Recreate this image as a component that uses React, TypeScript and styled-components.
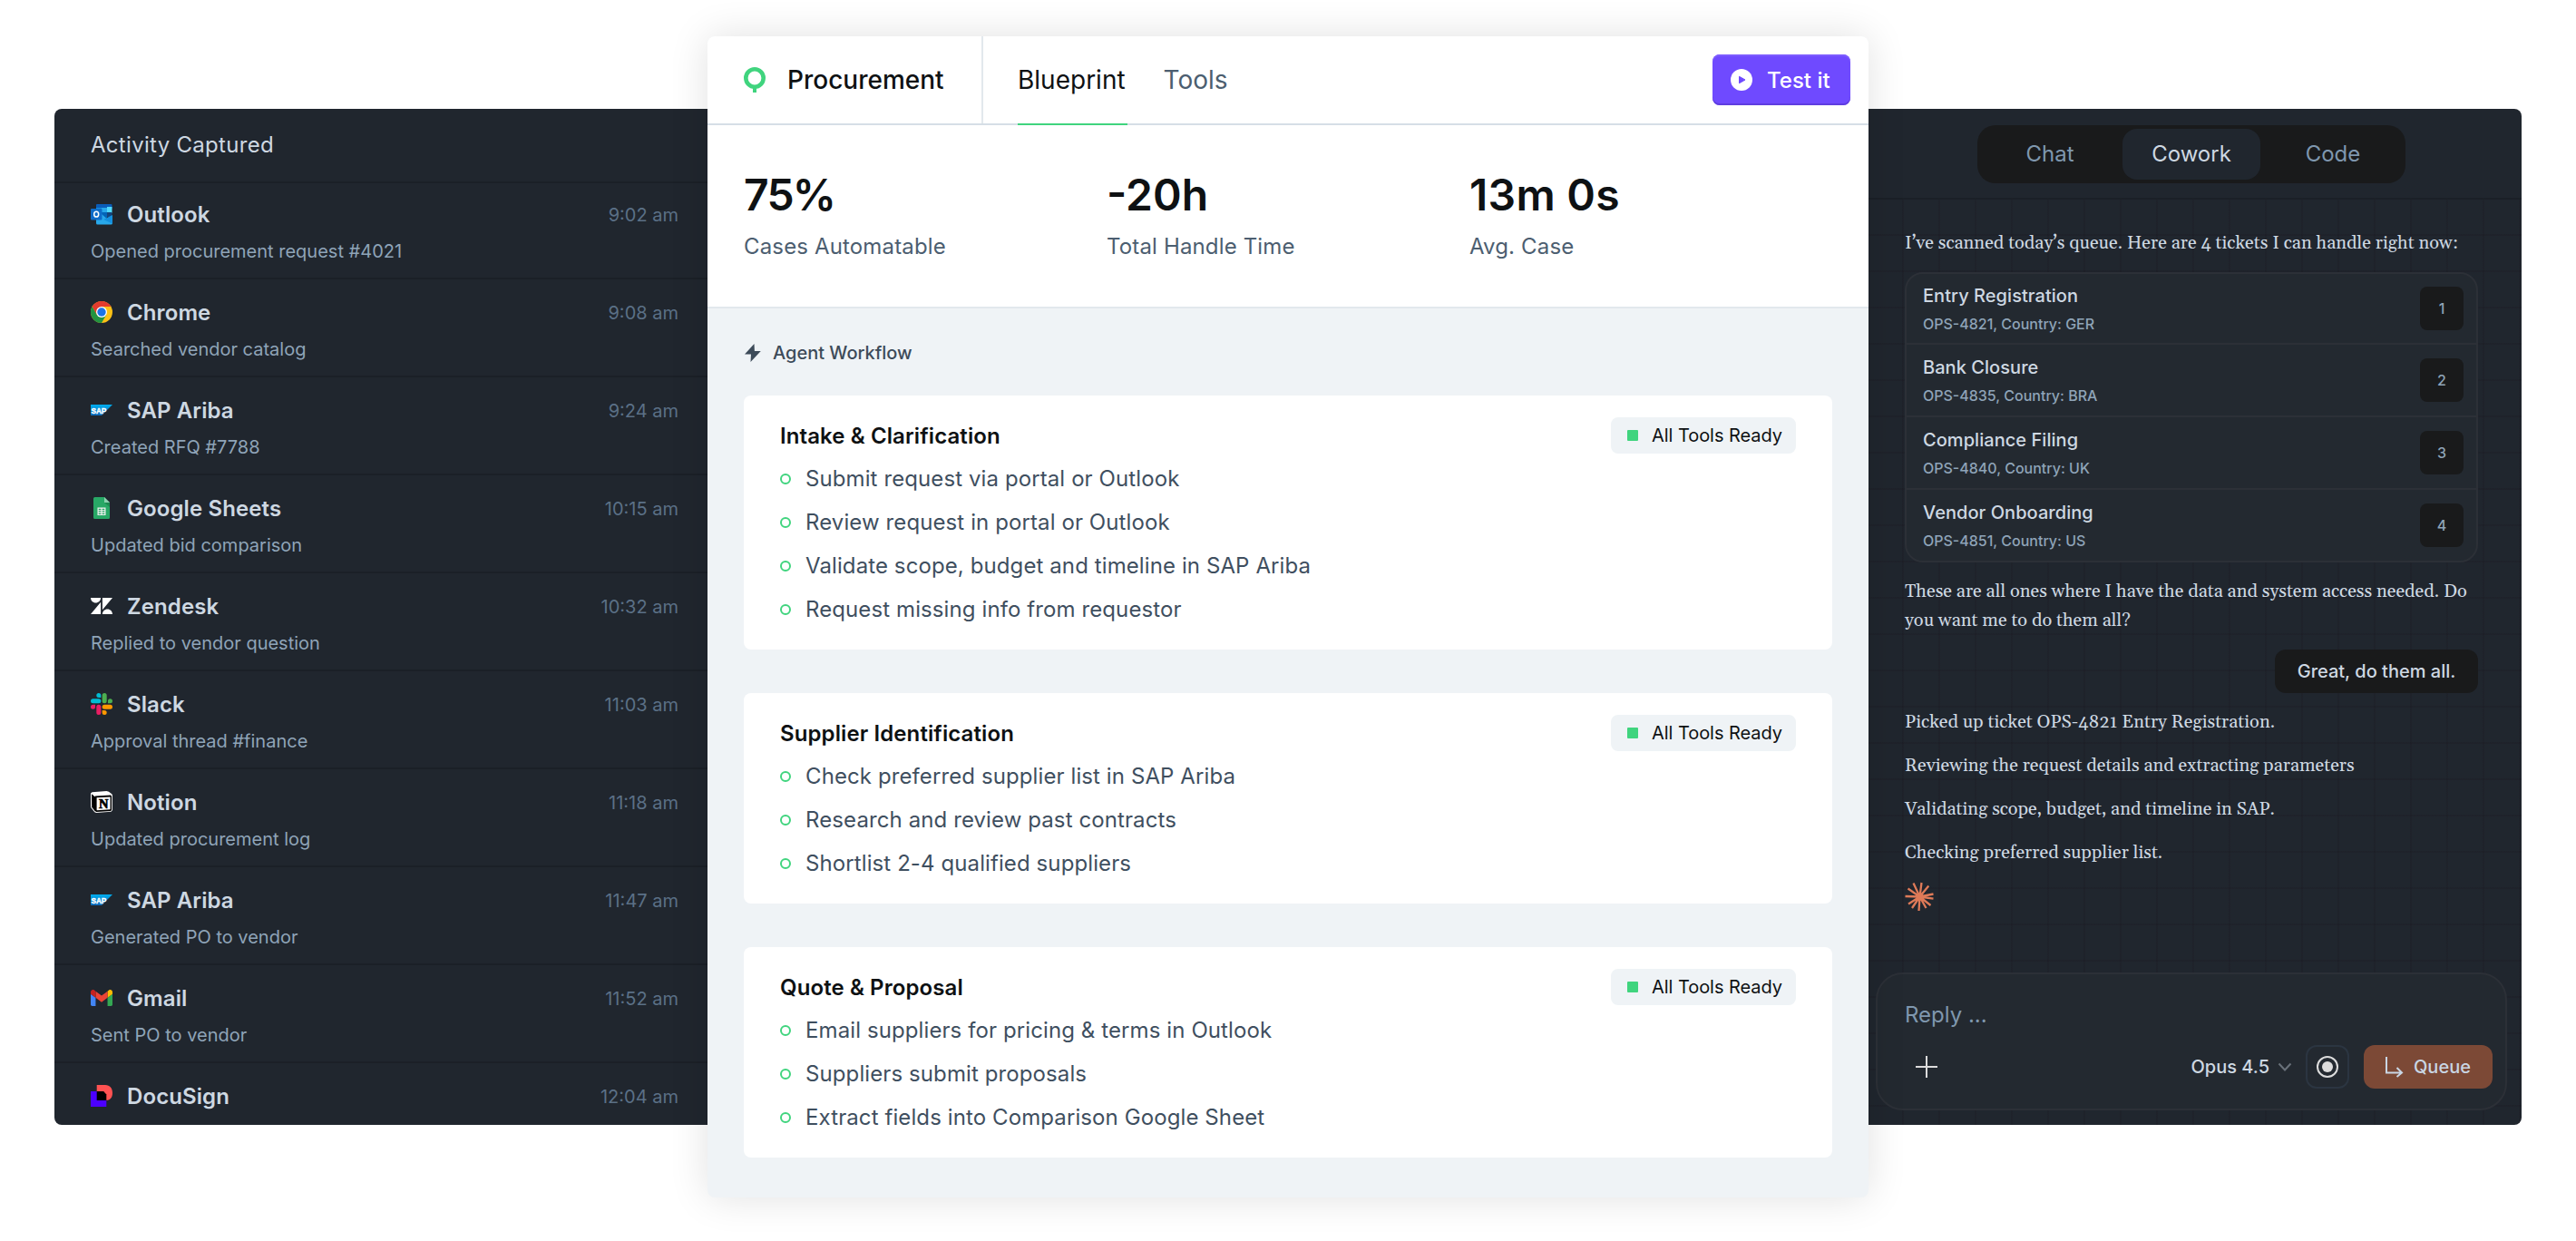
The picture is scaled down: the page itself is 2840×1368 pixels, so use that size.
import React from 'react';
import styled, { createGlobalStyle } from 'styled-components';

const colors = {
  panel: '#20262e',
  panelLine: '#1b2027',
  raised: '#232930',
  raisedLine: '#2c3037',
  black: '#191a1b',
  ink: '#0e1113',
  text: '#ced8e2',
  muted: '#8fa4b8',
  faded: '#5b7086',
  slate: '#4c5e70',
  green: '#40d47e',
  mist: '#eff3f6',
};

const GlobalStyle = createGlobalStyle`
  *,
  *::before {
    box-sizing: border-box;
  }
  body {
    margin: 0;
    background: #fff;
    font-family: Inter, 'Liberation Sans', sans-serif;
  }
  svg {
    display: block;
    flex: none;
  }
`;

const Page = styled.main`
  display: flex;
  align-items: flex-start;
  justify-content: center;
  width: 2840px;
  height: 1368px;
  padding-top: 40px;
  overflow: hidden;
`;

const SidePanel = styled.section<{ side: 'left' | 'right' }>`
  display: flex;
  flex-direction: column;
  width: 720px;
  height: 1120px;
  margin-top: 80px;
  overflow: hidden;
  background: ${colors.panel};
  border-radius: ${({ side }) => (side === 'left' ? '8px 0 0 8px' : '0 8px 8px 0')};
`;

/* Activity */

const ActivityHeader = styled.header`
  flex: none;
  height: 82px;
  padding: 0 40px;
  border-bottom: 2px solid ${colors.panelLine};
  color: ${colors.text};
  font-size: 24px;
  line-height: 79px;
  letter-spacing: 0.3px;
`;

const ActivityList = styled.div`
  margin-top: -2px;
`;

const ActivityRow = styled.article`
  height: 108px;
  padding: 20px 32px 0 40px;
  border-bottom: 2px solid ${colors.panelLine};
`;

const ActivityTitle = styled.div`
  display: flex;
  align-items: center;
  height: 32px;
`;

const AppName = styled.span`
  flex: 1;
  margin-left: 16px;
  color: ${colors.text};
  font-size: 24px;
  font-weight: 600;
  line-height: 31px;
  letter-spacing: 0.1px;
`;

const Time = styled.time`
  padding-top: 2px;
  color: ${colors.faded};
  font-size: 20px;
`;

const Description = styled.p`
  margin: 10px 0 0;
  color: ${colors.muted};
  font-size: 20px;
  line-height: 30px;
`;

/* Blueprint */

const Blueprint = styled.section`
  z-index: 1;
  width: 1280px;
  height: 1280px;
  overflow: hidden;
  background: ${colors.mist};
  border-radius: 8px;
  box-shadow: 0 0 44px rgba(0, 0, 0, 0.12);
`;

const BlueprintHeader = styled.header`
  display: flex;
  height: 98px;
  background: #fff;
  border-bottom: 2px solid #d6dee6;
`;

const Brand = styled.div`
  display: flex;
  align-items: center;
  gap: 24px;
  width: 304px;
  padding-left: 40px;
  border-right: 2px solid #e2e8ed;
  color: ${colors.ink};
  font-size: 28px;
  font-weight: 500;
`;

const Nav = styled.nav`
  display: flex;
  flex: 1;
  gap: 40px;
  padding-left: 38px;
`;

const NavTab = styled.a<{ active?: boolean }>`
  height: 98px;
  padding-right: 2px;
  border-bottom: 2px solid ${({ active }) => (active ? colors.green : 'transparent')};
  color: ${({ active }) => (active ? colors.ink : colors.slate)};
  font-size: 28px;
  line-height: 96px;
`;

const TestButton = styled.button`
  display: flex;
  align-items: center;
  gap: 16px;
  width: 152px;
  height: 56px;
  margin: 20px 20px 0 0;
  padding: 0 0 0 20px;
  border: 0;
  border-radius: 8px;
  background: #6f4aff;
  box-shadow: inset 0 2px 0 #7d5cff, inset 0 -2px 0 #5f3de0;
  color: #fff;
  font: 500 24px Inter, sans-serif;
`;

const Stats = styled.div`
  display: grid;
  grid-template-columns: repeat(3, 400px);
  height: 202px;
  padding: 47px 40px 0;
  background: #fff;
  border-bottom: 2px solid #e2e8ed;
`;

const StatValue = styled.div<{ spacing?: number }>`
  color: ${colors.ink};
  font-size: 48px;
  font-weight: 600;
  line-height: 60px;
  letter-spacing: ${({ spacing = 0 }) => spacing}px;
`;

const StatLabel = styled.div`
  margin-top: 11px;
  color: ${colors.slate};
  font-size: 24px;
  line-height: 32px;
  letter-spacing: 0.15px;
`;

const Workflow = styled.div`
  display: flex;
  flex-direction: column;
  gap: 48px;
  padding: 34px 40px 0;
`;

const WorkflowHeading = styled.h2`
  display: flex;
  align-items: center;
  gap: 12px;
  height: 30px;
  margin: 0 0 -16px;
  color: #3d4b59;
  font-size: 20px;
  font-weight: 500;
`;

const Card = styled.article`
  padding: 20px 40px;
  background: #fff;
  border-radius: 8px;
`;

const CardHeader = styled.div`
  display: flex;
  align-items: center;
  justify-content: space-between;
  height: 48px;
  color: ${colors.ink};
  font-size: 24px;
  font-weight: 600;
  letter-spacing: 0.1px;
`;

const Badge = styled.span`
  display: flex;
  align-items: center;
  gap: 15px;
  width: 204px;
  height: 40px;
  padding-left: 18px;
  background: ${colors.mist};
  border-radius: 8px;
  font-size: 20px;
  font-weight: 400;
  letter-spacing: -0.05px;

  &::before {
    content: '';
    width: 12px;
    height: 12px;
    background: ${colors.green};
    border-radius: 1px;
  }
`;

const Step = styled.div`
  display: flex;
  align-items: center;
  gap: 16px;
  height: 48px;
  color: #3f4f5f;
  font-size: 24px;
  line-height: 46px;
  letter-spacing: 0.1px;

  &::before {
    content: '';
    width: 12px;
    height: 12px;
    border: 2px solid ${colors.green};
    border-radius: 50%;
  }
`;

/* Cowork */

const ModeBar = styled.header`
  display: flex;
  justify-content: center;
  flex: none;
  height: 100px;
  padding: 18px 8px 0 0;
  border-bottom: 2px solid ${colors.panelLine};
`;

const ModeSwitch = styled.div`
  display: flex;
  gap: 4px;
  height: 64px;
  padding: 4px;
  background: ${colors.black};
  border-radius: 20px;
`;

const Mode = styled.button<{ active?: boolean }>`
  width: 152px;
  padding: 0 0 1px;
  border: 0;
  border-radius: 16px;
  background: ${({ active }) => (active ? colors.panel : 'transparent')};
  color: ${({ active }) => (active ? colors.text : '#7f97ae')};
  font: 400 24px Inter, sans-serif;
`;

const Thread = styled.div`
  display: flex;
  flex: 1;
  flex-direction: column;
  padding: 32px 48px 0 40px;
  background-image: linear-gradient(90deg, rgba(24, 22, 28, 0.2) 2px, transparent 2px),
    linear-gradient(rgba(24, 22, 28, 0.2) 2px, transparent 2px);
  background-size: 40px 40px;
  background-position: 37px 38px;
`;

const Message = styled.p`
  margin: 0 -8px 16px 0;
  color: ${colors.text};
  font-family: Georgia, Gelasio, 'Liberation Serif', serif;
  font-size: 20px;
  line-height: 32px;
`;

const Tickets = styled.div`
  height: 320px;
  margin-bottom: 16px;
  border: 2px solid ${colors.raisedLine};
  border-radius: 20px;
  background: ${colors.raised};
`;

const Ticket = styled.div`
  display: flex;
  align-items: center;
  justify-content: space-between;
  height: 80px;
  padding: 0 14px 0 18px;
  border-bottom: 2px solid ${colors.raisedLine};

  &:first-child {
    height: 78px;
  }
  &:last-child {
    height: 78px;
    border-bottom: 0;
  }
`;

const TicketTitle = styled.div`
  color: ${colors.text};
  font-size: 20px;
  font-weight: 500;
  line-height: 34px;
  letter-spacing: 0.05px;
`;

const TicketMeta = styled.div`
  color: ${colors.muted};
  font-size: 16px;
  font-weight: 500;
  line-height: 28px;
`;

const TicketNumber = styled.span`
  display: flex;
  align-items: center;
  justify-content: center;
  width: 48px;
  height: 48px;
  border-radius: 8px;
  background: ${colors.black};
  color: ${colors.muted};
  font-size: 16px;
  font-weight: 500;
`;

const Bubble = styled.p`
  align-self: flex-end;
  width: 224px;
  height: 48px;
  margin: 0 0 16px;
  border-radius: 12px;
  background: ${colors.black};
  color: ${colors.text};
  font-size: 20px;
  font-weight: 500;
  line-height: 49px;
  text-align: center;
`;

const Composer = styled.div`
  height: 152px;
  margin: auto -32px 16px;
  padding: 30px 14px 0 30px;
  border: 2px solid ${colors.raisedLine};
  border-radius: 30px;
  background: ${colors.raised};
`;

const Placeholder = styled.div`
  height: 48px;
  color: #7f97ae;
  font-size: 24px;
  line-height: 30px;
`;

const ComposerTools = styled.div`
  display: flex;
  align-items: center;
  height: 48px;
  padding-left: 12px;
`;

const ModelPicker = styled.span`
  display: flex;
  flex: 1;
  align-items: center;
  justify-content: flex-end;
  gap: 9px;
  color: ${colors.text};
  font-size: 20px;
  font-weight: 500;
`;

const RecordButton = styled.button`
  display: flex;
  align-items: center;
  justify-content: center;
  width: 48px;
  height: 48px;
  margin: 0 16px 0 15px;
  padding: 0;
  border: 2px solid #2b3541;
  border-radius: 12px;
  background: transparent;
`;

const QueueButton = styled.button`
  display: flex;
  align-items: center;
  gap: 11px;
  width: 142px;
  height: 48px;
  padding: 0 0 0 24px;
  border: 0;
  border-radius: 12px;
  background: #7c4936;
  color: #c9d6e4;
  font: 500 20px Inter, sans-serif;
`;

const Logo: React.FC<React.PropsWithChildren<{ box?: string }>> = ({ box = '0 0 24 24', children }) => (
  <svg width="24" height="24" viewBox={box}>
    {children}
  </svg>
);

const OutlookLogo = () => (
  <Logo>
    <path fill="#0a5cb8" d="M7 1h15.500a1 1 0 0 1 1 1v4H6V2a1 1 0 0 1 1-1z" />
    <path fill="#1490df" d="M6 5h6v6H6z" />
    <path fill="#28a8ea" d="M12 5h6v6h-6z" />
    <path fill="#50d9ff" d="M18 4h5.500v7H18z" />
    <path fill="#0364b8" d="M12 10h6v6h-6z" />
    <path fill="#14447d" d="M18 10h5.500v5H18z" />
    <path fill="#28a8ea" d="M6 12h6l12 10.500a1.500 1.500 0 0 1-1.500 1H7.500A1.500 1.500 0 0 1 6 22z" />
    <path fill="#1490df" d="M24 13v9.500L14 18z" />
    <rect y="6" width="12.500" height="12.500" rx="1" fill="#0f6cc8" />
    <ellipse cx="6.200" cy="12.200" rx="2.500" ry="2.900" fill="none" stroke="#fff" strokeWidth="1.500" />
  </Logo>
);

const ChromeLogo = () => (
  <Logo>
    <circle cx="12" cy="12" r="12" fill="#fbc116" />
    <path fill="#e33b2e" d="M1.600 6A12 12 0 0 1 22.400 6H12L6.800 15z" />
    <path fill="#229342" d="M1.600 6A12 12 0 0 0 12 24l5.200-9-10.400 0z" />
    <circle cx="12" cy="12" r="6" fill="#fff" />
    <circle cx="12" cy="12" r="4.700" fill="#1a73e8" />
  </Logo>
);

const SapLogo = () => (
  <Logo>
    <defs>
      <linearGradient id="sap" x2="0" y2="1">
        <stop stopColor="#00aeef" />
        <stop offset="1" stopColor="#0a66b8" />
      </linearGradient>
    </defs>
    <path fill="url(#sap)" d="M0 6h24L12 18H0z" />
    <text x="0.400" y="15.600" fill="#fff" fontFamily="Liberation Sans, sans-serif" fontSize="9.500" fontWeight="700" textLength="17" lengthAdjust="spacingAndGlyphs" stroke="#fff" strokeWidth="0.400">
      SAP
    </text>
  </Logo>
);

const SheetsLogo = () => (
  <Logo>
    <path fill="#28a866" d="M4.500 0H15l6 6v16.500a1.500 1.500 0 0 1-1.500 1.500h-15A1.500 1.500 0 0 1 3 22.500v-21A1.500 1.500 0 0 1 4.500 0z" />
    <path fill="#8ed1b1" d="M15 0l6 6h-6z" />
    <path fill="#1c8a50" d="M15 6h6v5z" />
    <path fill="#f1f1f1" fillRule="evenodd" d="M7.500 11.500h9V20h-9zM8.700 12.800v1.400h2.700v-1.400zm3.900 0v1.400h2.700v-1.400zM8.700 15.300v1.300h2.700v-1.300zm3.900 0v1.300h2.700v-1.300zM8.700 17.700v1.200h2.700v-1.200zm3.900 0v1.200h2.700v-1.200z" />
  </Logo>
);

const ZendeskLogo = () => (
  <Logo>
    <path fill="#fff" d="M12.914 2.904V16.290L24 2.905H12.914zM0 2.906C0 5.966 2.483 8.450 5.543 8.450s5.542-2.484 5.543-5.544H0zm11.086 4.807L0 21.096h11.086V7.713zm7.370 7.840c-3.063 0-5.542 2.480-5.542 5.543H24c0-3.060-2.480-5.543-5.543-5.543z" />
  </Logo>
);

const SlackLogo = () => (
  <Logo>
    <path fill="#e91e63" d="M5.042 15.165a2.528 2.528 0 0 1-2.520 2.523A2.528 2.528 0 0 1 0 15.165a2.527 2.527 0 0 1 2.522-2.520h2.520v2.520zM6.313 15.165a2.527 2.527 0 0 1 2.521-2.520 2.527 2.527 0 0 1 2.521 2.520v6.313A2.528 2.528 0 0 1 8.834 24a2.528 2.528 0 0 1-2.521-2.522v-6.313z" />
    <path fill="#00bcd4" d="M8.834 5.042a2.528 2.528 0 0 1-2.521-2.520A2.528 2.528 0 0 1 8.834 0a2.528 2.528 0 0 1 2.521 2.522v2.520H8.834zM8.834 6.313a2.528 2.528 0 0 1 2.521 2.521 2.528 2.528 0 0 1-2.521 2.521H2.522A2.528 2.528 0 0 1 0 8.834a2.528 2.528 0 0 1 2.522-2.521h6.312z" />
    <path fill="#4caf50" d="M18.956 8.834a2.528 2.528 0 0 1 2.522-2.521A2.528 2.528 0 0 1 24 8.834a2.528 2.528 0 0 1-2.522 2.521h-2.522V8.834zM17.688 8.834a2.528 2.528 0 0 1-2.523 2.521 2.527 2.527 0 0 1-2.520-2.521V2.522A2.527 2.527 0 0 1 15.165 0a2.528 2.528 0 0 1 2.523 2.522v6.312z" />
    <path fill="#ff9800" d="M15.165 18.956a2.528 2.528 0 0 1 2.523 2.522A2.528 2.528 0 0 1 15.165 24a2.527 2.527 0 0 1-2.520-2.522v-2.522h2.520zM15.165 17.688a2.527 2.527 0 0 1-2.520-2.523 2.526 2.526 0 0 1 2.520-2.520h6.313A2.527 2.527 0 0 1 24 15.165a2.528 2.528 0 0 1-2.522 2.523h-6.313z" />
  </Logo>
);

const NotionLogo = () => (
  <Logo>
    <path fill="#fff" d="M1.500 1.200L17.500 0l2.500.8 3.500 2.700.5 1.200V21l-1.500 1.700L6 24l-1.700-.8L.5 18.500 0 17V2.500z" />
    <path fill="#000" d="M1 3.200l4 3.300v16L1.200 17.800z" />
    <path fill="#000" d="M4.800 5.600L22 4.600l1.100 1.200v15l-1 1.100-16 1-1.300-1z" />
    <path fill="#fff" d="M6.600 7.300l15-.9v13.900l-15 .9z" />
    <text x="14.200" y="19" fill="#000" stroke="#000" strokeWidth="0.700" fontFamily="Liberation Serif, serif" fontSize="14.500" fontWeight="700" textAnchor="middle">
      N
    </text>
  </Logo>
);

const GmailLogo = () => (
  <Logo box="52 31 88 88">
    <path fill="#4285f4" d="M58 108h14V74L52 59v43c0 3.320 2.690 6 6 6" />
    <path fill="#34a853" d="M120 108h14c3.320 0 6-2.690 6-6V59l-20 15" />
    <path fill="#fbbc04" d="M120 48v26l20-15v-8c0-7.420-8.470-11.650-14.400-7.200" />
    <path fill="#ea4335" d="M72 74V48l24 18 24-18v26L96 92" />
    <path fill="#c5221f" d="M52 51v8l20 15V48l-5.600-4.200c-5.940-4.450-14.400-.22-14.400 7.200" />
  </Logo>
);

const DocuSignLogo = () => (
  <Logo>
    <path fill="#4c00ff" d="M0 7h7v10h10.300v7H0z" />
    <path fill="#ff5252" d="M6.700 0H16c5.300 0 8 3.600 8 8.800 0 4.700-2.200 8.200-6.700 8.200L14 7H6.700z" />
    <path fill="#000" d="M6.700 7h7.500l3.100 3.600V17H6.700z" />
  </Logo>
);

const BrandMark = () => (
  <svg width="24" height="28" viewBox="0 0 24 28">
    <circle cx="12" cy="12" r="9.700" fill="none" stroke={colors.green} strokeWidth="4.600" />
    <path fill={colors.green} d="M10 22h4v6h-4z" />
  </svg>
);

const PlayIcon = () => (
  <svg width="24" height="24" viewBox="0 0 24 24">
    <circle cx="12" cy="12" r="12" fill="#fff" />
    <path fill="#6f4aff" stroke="#6f4aff" strokeLinejoin="round" d="M9.500 8.300v7.400l6.500-3.700z" />
  </svg>
);

const BoltIcon = () => (
  <svg width="20" height="22" viewBox="0 0 20 22">
    <path fill="#3d4b59" d="M11.500 1L1 12.500h7L7.500 21 18.800 9h-6.900z" />
  </svg>
);

const SparkIcon = () => (
  <svg width="32" height="32" viewBox="0 0 32 32">
    <path
      stroke="#de7a58"
      strokeWidth="2.300"
      d="M16.500 16.500L9.500 1.500M16.500 16.500L18.500 1M16.500 16.500L26.300 4.500M16.500 16.500L31.500 13.500M16.500 16.500L31.500 18.700M16.500 16.500L28.500 26M16.500 16.500L23.500 29M16.500 16.500L15.500 32M16.500 16.500L8 29M16.500 16.500L4 24.500M16.500 16.500L0.500 16M16.500 16.500L3.500 7.500"
    />
    <circle cx="16.700" cy="16.500" r="4" fill="#de7a58" />
  </svg>
);

const PlusIcon = () => (
  <svg width="24" height="24" viewBox="0 0 24 24">
    <path stroke="#dcdcdc" strokeWidth="2" d="M12 0v24M0 12h24" />
  </svg>
);

const ChevronIcon = () => (
  <svg width="16" height="10" viewBox="0 0 16 10">
    <path fill="none" stroke="#69717a" strokeWidth="2" d="M1.500 1.500L8 8.500l6.500-7" />
  </svg>
);

const RecordIcon = () => (
  <svg width="24" height="24" viewBox="0 0 24 24">
    <circle cx="12" cy="12" r="11" fill="none" stroke="#dcdcdc" strokeWidth="2" />
    <circle cx="12" cy="12" r="6" fill="#dcdcdc" />
  </svg>
);

const QueueIcon = () => (
  <svg width="20" height="24" viewBox="0 0 20 24">
    <path fill="none" stroke="#c9d6e4" strokeWidth="2" d="M1 1v17.500h17M12.500 13l5.500 5.500-5.500 4.500" />
  </svg>
);

const activities = [
  { logo: OutlookLogo, name: 'Outlook', time: '9:02 am', text: 'Opened procurement request #4021' },
  { logo: ChromeLogo, name: 'Chrome', time: '9:08 am', text: 'Searched vendor catalog' },
  { logo: SapLogo, name: 'SAP Ariba', time: '9:24 am', text: 'Created RFQ #7788' },
  { logo: SheetsLogo, name: 'Google Sheets', time: '10:15 am', text: 'Updated bid comparison' },
  { logo: ZendeskLogo, name: 'Zendesk', time: '10:32 am', text: 'Replied to vendor question' },
  { logo: SlackLogo, name: 'Slack', time: '11:03 am', text: 'Approval thread #finance' },
  { logo: NotionLogo, name: 'Notion', time: '11:18 am', text: 'Updated procurement log' },
  { logo: SapLogo, name: 'SAP Ariba', time: '11:47 am', text: 'Generated PO to vendor' },
  { logo: GmailLogo, name: 'Gmail', time: '11:52 am', text: 'Sent PO to vendor' },
  { logo: DocuSignLogo, name: 'DocuSign', time: '12:04 am', text: '' },
];

const stats = [
  { value: '75%', label: 'Cases Automatable', spacing: -1.8 },
  { value: '-20h', label: 'Total Handle Time' },
  { value: '13m 0s', label: 'Avg. Case', spacing: 0.3 },
];

const stages = [
  {
    title: 'Intake & Clarification',
    steps: [
      'Submit request via portal or Outlook',
      'Review request in portal or Outlook',
      'Validate scope, budget and timeline in SAP Ariba',
      'Request missing info from requestor',
    ],
  },
  {
    title: 'Supplier Identification',
    steps: [
      'Check preferred supplier list in SAP Ariba',
      'Research and review past contracts',
      'Shortlist 2-4 qualified suppliers',
    ],
  },
  {
    title: 'Quote & Proposal',
    steps: [
      'Email suppliers for pricing & terms in Outlook',
      'Suppliers submit proposals',
      'Extract fields into Comparison Google Sheet',
    ],
  },
];

const tickets = [
  { title: 'Entry Registration', meta: 'OPS-4821, Country: GER' },
  { title: 'Bank Closure', meta: 'OPS-4835, Country: BRA' },
  { title: 'Compliance Filing', meta: 'OPS-4840, Country: UK' },
  { title: 'Vendor Onboarding', meta: 'OPS-4851, Country: US' },
];

const ActivityPanel = () => (
  <SidePanel side="left">
    <ActivityHeader>Activity Captured</ActivityHeader>
    <ActivityList>
      {activities.map(({ logo: AppLogo, name, time, text }) => (
        <ActivityRow key={time}>
          <ActivityTitle>
            <AppLogo />
            <AppName>{name}</AppName>
            <Time>{time}</Time>
          </ActivityTitle>
          {text && <Description>{text}</Description>}
        </ActivityRow>
      ))}
    </ActivityList>
  </SidePanel>
);

const BlueprintPanel = () => (
  <Blueprint>
    <BlueprintHeader>
      <Brand>
        <BrandMark />
        Procurement
      </Brand>
      <Nav>
        <NavTab active>Blueprint</NavTab>
        <NavTab>Tools</NavTab>
      </Nav>
      <TestButton>
        <PlayIcon />
        Test it
      </TestButton>
    </BlueprintHeader>
    <Stats>
      {stats.map(({ value, label, spacing }) => (
        <div key={label}>
          <StatValue spacing={spacing}>{value}</StatValue>
          <StatLabel>{label}</StatLabel>
        </div>
      ))}
    </Stats>
    <Workflow>
      <WorkflowHeading>
        <BoltIcon />
        Agent Workflow
      </WorkflowHeading>
      {stages.map(({ title, steps }) => (
        <Card key={title}>
          <CardHeader>
            {title}
            <Badge>All Tools Ready</Badge>
          </CardHeader>
          {steps.map((step) => (
            <Step key={step}>{step}</Step>
          ))}
        </Card>
      ))}
    </Workflow>
  </Blueprint>
);

const CoworkPanel = () => (
  <SidePanel side="right">
    <ModeBar>
      <ModeSwitch>
        <Mode>Chat</Mode>
        <Mode active>Cowork</Mode>
        <Mode>Code</Mode>
      </ModeSwitch>
    </ModeBar>
    <Thread>
      <Message>I’ve scanned today’s queue. Here are 4 tickets I can handle right now:</Message>
      <Tickets>
        {tickets.map(({ title, meta }, index) => (
          <Ticket key={title}>
            <div>
              <TicketTitle>{title}</TicketTitle>
              <TicketMeta>{meta}</TicketMeta>
            </div>
            <TicketNumber>{index + 1}</TicketNumber>
          </Ticket>
        ))}
      </Tickets>
      <Message>
        These are all ones where I have the data and system access needed. Do
        <br />
        you want me to do them all?
      </Message>
      <Bubble>Great, do them all.</Bubble>
      <Message>Picked up ticket OPS-4821 Entry Registration.</Message>
      <Message>Reviewing the request details and extracting parameters</Message>
      <Message>Validating scope, budget, and timeline in SAP.</Message>
      <Message>Checking preferred supplier list.</Message>
      <SparkIcon />
      <Composer>
        <Placeholder>Reply ...</Placeholder>
        <ComposerTools>
          <PlusIcon />
          <ModelPicker>
            Opus 4.5
            <ChevronIcon />
          </ModelPicker>
          <RecordButton>
            <RecordIcon />
          </RecordButton>
          <QueueButton>
            <QueueIcon />
            Queue
          </QueueButton>
        </ComposerTools>
      </Composer>
    </Thread>
  </SidePanel>
);

const App: React.FC = () => (
  <>
    <GlobalStyle />
    <Page>
      <ActivityPanel />
      <BlueprintPanel />
      <CoworkPanel />
    </Page>
  </>
);

export default App;
